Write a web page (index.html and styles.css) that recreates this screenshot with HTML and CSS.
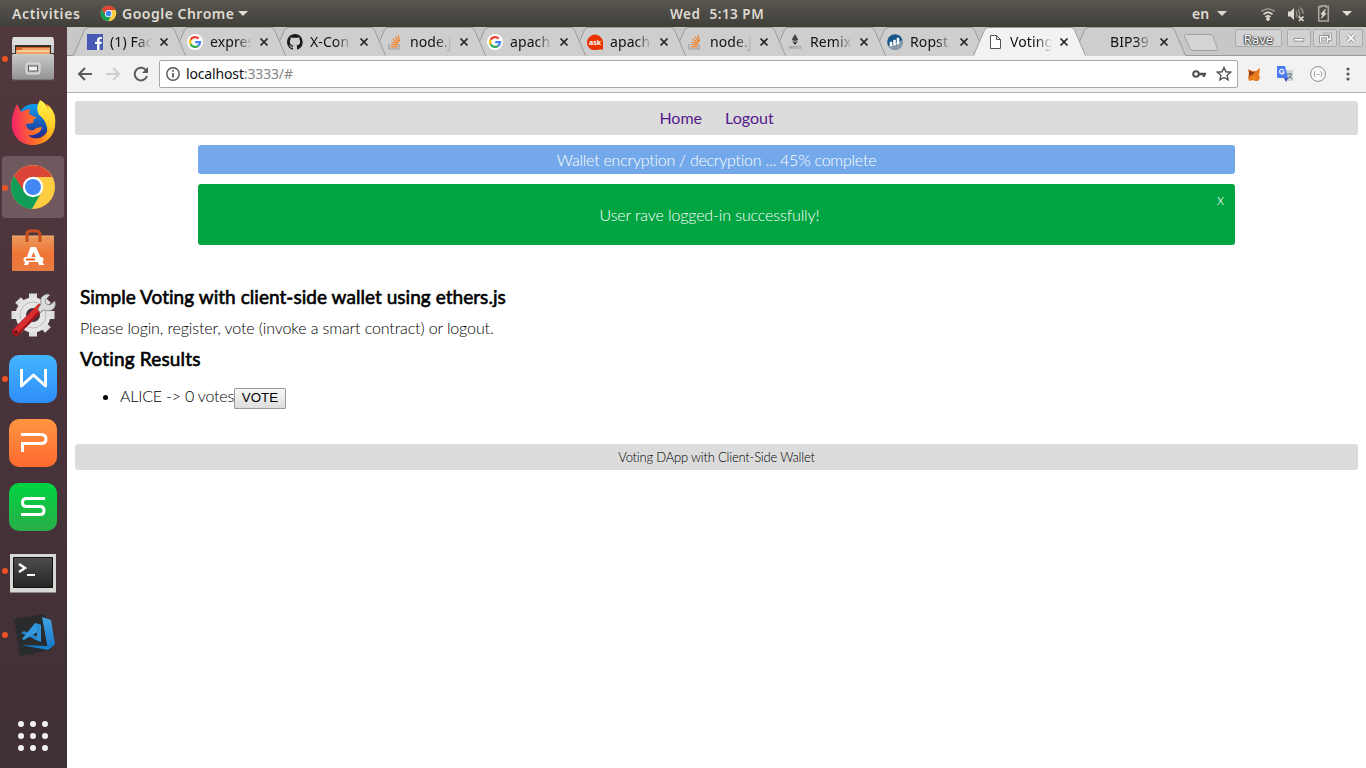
FILE: index.html
```html
<!DOCTYPE html>
<html lang="en">
<head>
<meta charset="utf-8">
<title>Voting DApp</title>
<link rel="stylesheet" href="styles.css">
</head>
<body>
<svg class="defs" aria-hidden="true">
  <defs>
    <symbol id="shape" viewBox="0 0 113 29">
      <path class="shape-fill" d="M0 29 L11 3 Q12 .5 15 .5 H98 Q101 .5 102 3 L113 29Z"/>
      <path class="shape-line" d="M.5 28.5 L11.5 3 Q12.500 .5 15 .5 H98 Q100.500 .5 101.500 3 L112.500 28.500"/>
    </symbol>
    <symbol id="close" viewBox="0 0 10 10"><path d="M1.500 1.500L8.500 8.500M8.500 1.500L1.500 8.500" stroke="currentColor" stroke-width="1.700"/></symbol>
    <symbol id="google" viewBox="0 0 16 16">
      <circle cx="8" cy="8" r="8" fill="#fff"/>
      <g fill="none" stroke-width="2.300"><path d="M11.600 4.600A5 5 0 0 0 3.600 5.700" stroke="#ea4335"/><path d="M3.600 5.700a5 5 0 0 0 0 4.600" stroke="#fbbc05"/><path d="M3.600 10.300a5 5 0 0 0 7.600 1.500" stroke="#34a853"/><path d="M11.200 11.800A5 5 0 0 0 13 8.200H8.200" stroke="#4285f4"/></g>
    </symbol>
    <symbol id="stack" viewBox="0 0 16 16">
      <path d="M2 10v5h10v-5" fill="none" stroke="#9b9da0" stroke-width="1.200"/>
      <path d="M4 12.800h6.500M4 10.500l6.500.7M4.500 8l6.200 1.800M5.700 5.300l5.600 3.400M8 2.800l4 5M11 1.200l1.500 6" stroke="#f48024" stroke-width="1.200"/>
    </symbol>
    <symbol id="chrome" viewBox="0 0 48 48">
      <circle cx="24" cy="24" r="22" fill="#ffcd42"/>
      <path d="M5 13A22 22 0 0 1 43.300 14H24L14.500 29Z" fill="#dc4437"/>
      <path d="M5 13A22 22 0 0 0 23 46L32.500 29H15.500Z" fill="#109d58"/>
      <circle cx="24" cy="24" r="10.200" fill="#fff"/><circle cx="24" cy="24" r="8" fill="#4387f5"/>
    </symbol>
    <linearGradient id="gray" x2="0" y2="1"><stop stop-color="#c9c9c9"/><stop offset="1" stop-color="#929292"/></linearGradient>
    <linearGradient id="blue" x2="0" y2="1"><stop stop-color="#44b5ff"/><stop offset="1" stop-color="#2f8df9"/></linearGradient>
    <linearGradient id="orange" x2="0" y2="1"><stop stop-color="#ff9440"/><stop offset="1" stop-color="#ff6a30"/></linearGradient>
    <linearGradient id="green" x2="0" y2="1"><stop stop-color="#00d441"/><stop offset="1" stop-color="#2aae48"/></linearGradient>
    <linearGradient id="bag" x2="0" y2="1"><stop stop-color="#e99a5c"/><stop offset=".5" stop-color="#ef7535"/><stop offset="1" stop-color="#e97b42"/></linearGradient>
    <linearGradient id="fox" x1="0" y1=".4" x2="1" y2=".3"><stop stop-color="#f52568"/><stop offset=".45" stop-color="#ff6a2b"/><stop offset=".8" stop-color="#ff9a1c"/><stop offset="1" stop-color="#ffbd25"/></linearGradient>
    <linearGradient id="flame" x2="0" y2="1"><stop stop-color="#fff44a"/><stop offset=".6" stop-color="#ffcb25"/><stop offset="1" stop-color="#ff8b1b"/></linearGradient>
    <linearGradient id="globe" x2="0" y2="1"><stop stop-color="#0aa0f0"/><stop offset="1" stop-color="#25288d"/></linearGradient>
    <linearGradient id="screen" x2="0" y2="1"><stop stop-color="#4d4d4d"/><stop offset="1" stop-color="#242424"/></linearGradient>
    <linearGradient id="code" x2="0" y2="1"><stop stop-color="#42a3e5"/><stop offset="1" stop-color="#1677c7"/></linearGradient>
  </defs>
</svg>

<header class="panel">
  <span class="panel-activities">Activities</span>
  <svg class="panel-chrome" viewBox="0 0 48 48"><use href="#chrome"/></svg>
  <span class="panel-app">Google Chrome</span>
  <i class="caret"></i>
  <span class="panel-clock"><span>Wed</span><span>5:13 PM</span></span>
  <span class="panel-lang">en</span>
  <i class="caret caret-lang"></i>
  <svg class="panel-wifi" viewBox="0 0 16 16"><g fill="none" stroke-width="1.600"><path d="M1.500 5.500Q8 .5 14.500 5.500" stroke="#99978f"/><path d="M3.500 8.300Q8 4.600 12.500 8.300M5.500 11Q8 8.800 10.500 11" stroke="#dfdbd2"/></g><circle cx="8" cy="13" r="1.900" fill="#dfdbd2"/></svg>
  <svg class="panel-sound" viewBox="0 0 18 16"><path d="M1 5.500h2.500L7 2v12L3.500 10.500H1z" fill="#dfdbd2"/><path d="M9 5q2 3 0 6M11 3q3.500 5 0 9M13.500 1.500Q16.500 5 16 8" fill="none" stroke="#918f87" stroke-width="1.300"/><path d="M12 10.500l4.500 4.500m0-4.500L12 15" stroke="#dfdbd2" stroke-width="1.700"/></svg>
  <svg class="panel-battery" viewBox="0 0 12 16"><path d="M4 1.500V.7h4v.8h2.500V15h-9V1.500z" fill="none" stroke="#aaa69e" stroke-width="1.500"/><path d="M7.800 4L3.500 8.500h2L4 12.500 8.500 8H6.400z" fill="#dfdbd2" stroke="#dfdbd2" stroke-width=".7"/></svg>
  <i class="caret caret-end"></i>
</header>

<div class="desktop">
  <nav class="dock">
    <div class="dock-item running"><svg viewBox="0 0 48 48"><path d="M3 6Q3 2 6 2H42q3 0 3 4V18H3z" fill="#c8c8c8"/><path d="M4 2h40l1 8H3z" fill="#dedede"/><path d="M6 10h36v12H6z" fill="#343030"/><path d="M7 12h34v10H7z" fill="#ce6027"/><path d="M7 15h5l2-2h27v9H7z" fill="#f0a160"/><path d="M8 16h32" stroke="#fff4d8"/><path d="M4 19h40q1 0 1 2v22q0 2-2 2H5q-2 0-2-2V21q0-2 1-2z" fill="url(#gray)"/><path d="M3 45h42" stroke="#62565a"/><rect x="17" y="28" width="14" height="11" rx="2" fill="#c5c5c5" stroke="#e0e0e0"/><rect x="19.500" y="31" width="9" height="5" fill="#f1f1f1" stroke="#5c5c5c"/></svg></div>
    <div class="dock-item"><svg viewBox="0 0 48 48"><circle cx="25" cy="22" r="17" fill="url(#globe)"/><path d="M5 12L8 5l4 8q5-3 9-3l-1 5 8 4-3 1-1 4-7 1q0 4 4 6 4 1 6-2l6-1q-1 5-6 7-3 2-8 1 6 6 14 2 9-6 7-16Q36 10 30 9q-1-4 2-7 4 3 5 7l1-4q9 7 8 19c0 14-11 22-23 22C8 46-2 31 5 12z" fill="url(#fox)"/><path d="M31 1q6 3 8 9l1-3q8 8 6 20-2 14-16 18 10-7 8-17-2-8-8-12-4-7 1-15z" fill="url(#flame)"/></svg></div>
    <div class="dock-item running active"><svg viewBox="0 0 48 48"><use href="#chrome"/></svg></div>
    <div class="dock-item"><svg viewBox="0 0 48 48"><path d="M3 9h42v35H3z" fill="url(#bag)"/><path d="M3 9h42" stroke="#f9b17d"/><path d="M18 15V8q0-4 3-4h6q4 0 4 4v7" fill="none" stroke="#c84c1e" stroke-width="3"/><path d="M21.500 20h5.500l8 18h-5l-5.500-13L19 38h-4z" fill="#fff"/><path d="M17 32.500h15" stroke="#fff" stroke-width="5" stroke-linecap="round"/><path d="M17 32.500h9" stroke="#ef6426" stroke-width="2"/></svg></div>
    <div class="dock-item"><svg viewBox="0 0 48 48"><g transform="translate(24 24)"><g stroke="#dedede" stroke-width="8"><path d="M0-21.500V21.500M-21.500 0H21.500"/><path d="M-15-15L15 15M15-15L-15 15"/></g><circle r="17.500" fill="#e5e5e5"/><circle r="13" fill="none" stroke="#bdbdbd"/><circle r="7" fill="#493037"/></g><path d="M7 41L31 17" stroke="#9e151a" stroke-width="8" stroke-linecap="round"/><path d="M7 40L30 16" stroke="#d92d30" stroke-width="5" stroke-linecap="round"/><path d="M29 18l3-5q-2-8 6-10l3 1-5 5 1 4 4 1 5-4q2 9-7 10l-5-1-3 3z" fill="#d8dcda" stroke="#888" stroke-width=".8"/><circle cx="7" cy="41" r="1.700" fill="#5d1017"/></svg></div>
    <div class="dock-item running"><svg viewBox="0 0 48 48"><rect width="48" height="48" rx="10" fill="url(#blue)"/><path d="M12.500 14V31L24.500 20 36.500 31V14" fill="none" stroke="#fff" stroke-width="3" stroke-linejoin="round"/></svg></div>
    <div class="dock-item"><svg viewBox="0 0 48 48"><rect width="48" height="48" rx="10" fill="url(#orange)"/><path d="M12 15.500h20q5 0 5 4.500t-5 4.500H13.500v8.500" fill="none" stroke="#fff" stroke-width="3"/></svg></div>
    <div class="dock-item"><svg viewBox="0 0 48 48"><rect width="48" height="48" rx="10" fill="url(#green)"/><path d="M36 15.500H17.500q-4 0-4 4t4 4H31q4 0 4 4t-4 4H12" fill="none" stroke="#fff" stroke-width="3"/></svg></div>
    <div class="dock-item running"><svg viewBox="0 0 48 48"><path d="M1 7h46v38H1z" fill="#d7d7d3"/><path d="M1 45.500h46" stroke="#898986"/><path d="M4.500 10.500h39v30h-39z" fill="url(#screen)" stroke="#111"/><path d="M10 17l6 4-6 4" fill="none" stroke="#fff" stroke-width="2.500"/><path d="M18 28h8" stroke="#fff" stroke-width="2"/></svg></div>
    <div class="dock-item running"><svg viewBox="0 0 48 48"><path d="M5 8l31-5 6 36-31 6z" fill="#292b2c"/><path d="M33 6l9 3 4 24-7 6z" fill="url(#code)"/><path d="M12 34l27 1 7-2-7 6z" fill="#167fcc"/><path d="M12 22l3-2 17 7V31z" fill="#2484cb"/><path d="M13 28l13-16 6 2v5L15 29z" fill="#3398de"/><path d="M26 12l6 2v17l-7-3 3-2V18z" fill="#2d91da"/></svg></div>
    <svg class="dock-apps" viewBox="0 0 32 32" fill="#f2f1ef"><circle cx="4" cy="4" r="3"/><circle cx="16" cy="4" r="3"/><circle cx="28" cy="4" r="3"/><circle cx="4" cy="16" r="3"/><circle cx="16" cy="16" r="3"/><circle cx="28" cy="16" r="3"/><circle cx="4" cy="28" r="3"/><circle cx="16" cy="28" r="3"/><circle cx="28" cy="28" r="3"/></svg>
  </nav>

  <main class="browser">
    <div class="tabs">
      <div class="tab t1"><svg class="tab-shape"><use href="#shape"/></svg><svg class="favicon" viewBox="0 0 16 16"><path d="M0 0h16v16H0z" fill="#4559b5"/><path d="M12.500 16V10h2l.3-2.300h-2.300V6.300c0-.8.400-1.200 1.300-1.200h1V3c-3-.4-4.700.7-4.700 3v1.700H8V10h2.100v6z" fill="#fff"/></svg><span class="tab-title">(1) Fac</span><svg class="tab-close"><use href="#close"/></svg></div>
      <div class="tab t2"><svg class="tab-shape"><use href="#shape"/></svg><svg class="favicon"><use href="#google"/></svg><span class="tab-title">expres</span><svg class="tab-close"><use href="#close"/></svg></div>
      <div class="tab t3"><svg class="tab-shape"><use href="#shape"/></svg><svg class="favicon" viewBox="0 0 16 16"><path d="M8 0C3.600 0 0 3.600 0 8c0 3.500 2.300 6.500 5.500 7.600.4.100.5-.2.500-.4v-1.500c-2.200.5-2.700-1-2.700-1-.4-.9-.9-1.200-.9-1.200-.7-.5.100-.5.100-.5.800.1 1.200.8 1.200.8.700 1.300 1.900.9 2.300.7.100-.5.300-.9.500-1.100-1.800-.2-3.600-.9-3.600-4 0-.9.300-1.600.8-2.100-.1-.2-.4-1 .1-2.100 0 0 .7-.2 2.200.8.600-.2 1.300-.3 2-.3s1.400.1 2 .3c1.500-1 2.200-.8 2.200-.8.400 1.100.2 1.900.1 2.100.5.600.8 1.300.8 2.100 0 3.100-1.900 3.700-3.700 3.900.3.300.6.800.6 1.500v2.200c0 .2.100.5.600.4A8 8 0 0 0 8 0z" fill="#1b1b1c"/></svg><span class="tab-title">X-Con</span><svg class="tab-close"><use href="#close"/></svg></div>
      <div class="tab t4"><svg class="tab-shape"><use href="#shape"/></svg><svg class="favicon"><use href="#stack"/></svg><span class="tab-title">node.j</span><svg class="tab-close"><use href="#close"/></svg></div>
      <div class="tab t5"><svg class="tab-shape"><use href="#shape"/></svg><svg class="favicon"><use href="#google"/></svg><span class="tab-title">apach</span><svg class="tab-close"><use href="#close"/></svg></div>
      <div class="tab t6"><svg class="tab-shape"><use href="#shape"/></svg><svg class="favicon" viewBox="0 0 16 16"><path d="M16 15.500h-4A8 8 0 1 1 16 8v3.500z" fill="#eb3300"/><text x="8" y="10.700" class="ask">ask</text></svg><span class="tab-title">apach</span><svg class="tab-close"><use href="#close"/></svg></div>
      <div class="tab t7"><svg class="tab-shape"><use href="#shape"/></svg><svg class="favicon"><use href="#stack"/></svg><span class="tab-title">node.j</span><svg class="tab-close"><use href="#close"/></svg></div>
      <div class="tab t8"><svg class="tab-shape"><use href="#shape"/></svg><svg class="favicon" viewBox="0 0 16 16"><path d="M8 0l3.200 5.500L8 7.500l-3.200-2z" fill="#444"/><path d="M4.800 6.400L8 8.500l3.200-2.100L8 11z" fill="#292929"/><text x="8" y="15" class="remix">remix</text></svg><span class="tab-title">Remix</span><svg class="tab-close"><use href="#close"/></svg></div>
      <div class="tab t9"><svg class="tab-shape"><use href="#shape"/></svg><svg class="favicon" viewBox="0 0 16 16"><circle cx="8" cy="8" r="7.800" fill="#17548a"/><path d="M1 12L15.800 6Q17 12 10 15.500 4 16.500 1 12z" fill="#8b9aa7"/><path d="M3 12V8h2v4zm3.500-1V6h2v5zM10 10V4h2v6z" fill="#fff" stroke="#fff" stroke-width=".5"/></svg><span class="tab-title">Ropst</span><svg class="tab-close"><use href="#close"/></svg></div>
      <div class="tab current"><svg class="tab-shape"><use href="#shape"/></svg><svg class="favicon" viewBox="0 0 16 16"><path d="M3.500 1.500h6l4 4v9h-10zM9.500 1.500v4h4" fill="#fff" stroke="#555"/></svg><span class="tab-title">Voting</span><svg class="tab-close"><use href="#close"/></svg></div>
      <div class="tab t11"><svg class="tab-shape"><use href="#shape"/></svg><i class="favicon"></i><span class="tab-title">BIP39</span><svg class="tab-close"><use href="#close"/></svg></div>
      <svg class="new-tab" viewBox="0 0 36 18"><path d="M3.500.5H27q2 0 3 2l4.500 12q1 2-1.500 2H10q-2 0-3-2L1.500 2.500q-.8-2 2-2z" fill="#d4d4d4" stroke="#a2a2a2"/></svg>
      <div class="window-buttons">
        <span class="profile">Rave</span>
        <svg viewBox="0 0 24 18"><path d="M6.500 9.500h11v3h-11z" fill="#fff" stroke="#8b8b8b"/></svg>
        <svg viewBox="0 0 24 18"><path d="M10 4.500h8v6h-3M7 7.500h8v6H7z" fill="none" stroke="#888" stroke-width="3"/><path d="M10 4.500h8v6h-3M7 7.500h8v6H7z" fill="none" stroke="#fff" stroke-width="1.300"/></svg>
        <svg viewBox="0 0 24 18"><path d="M8 5l8 8m0-8l-8 8" stroke="#888" stroke-width="3.500"/><path d="M8 5l8 8m0-8l-8 8" stroke="#fff" stroke-width="2"/></svg>
      </div>
    </div>

    <div class="toolbar">
      <svg class="nav-icon" viewBox="0 0 16 16"><path d="M15 8H2M8 2L2 8l6 6" fill="none" stroke="#5a5a5a" stroke-width="2"/></svg>
      <svg class="nav-icon" viewBox="0 0 16 16"><path d="M1 8h13M8 2l6 6-6 6" fill="none" stroke="#cecece" stroke-width="2"/></svg>
      <svg class="nav-icon" viewBox="0 0 16 16"><path d="M13.500 5A6.300 6.300 0 1 0 14 10" fill="none" stroke="#5a5a5a" stroke-width="2"/><path d="M15 1v6H9z" fill="#5a5a5a"/></svg>
      <div class="address">
        <svg class="info" viewBox="0 0 14 14"><circle cx="7" cy="7" r="6.200" fill="none" stroke="#555" stroke-width="1.400"/><path d="M7 6v4.500M7 3v1.700" stroke="#555" stroke-width="1.700"/></svg>
        <span class="url">localhost<span>:3333/#</span></span>
        <svg class="key" viewBox="0 0 14 10"><circle cx="4" cy="5" r="2.800" fill="none" stroke="#505050" stroke-width="2"/><path d="M6.500 5H14M11.800 5v3" stroke="#505050" stroke-width="2.300"/></svg>
        <svg class="star" viewBox="0 0 16 16"><path d="M8 1.500l1.900 4.300 4.700.4-3.600 3.100 1.100 4.600L8 11.500l-4.100 2.400L5 9.300 1.400 6.200l4.700-.4z" fill="none" stroke="#505050" stroke-width="1.400"/></svg>
      </div>
      <svg class="metamask" viewBox="0 0 12 13"><path d="M0 1l4 2h4l4-3-1 7 1 3-2 3H7l-2-1-4 1-1-4 1-3z" fill="#e8791d"/><path d="M1 2l3 2h3l-3 3-3 1z" fill="#933d15"/><path d="M5 9l3-1-2 4z" fill="#ef9834"/></svg>
      <svg class="translate" viewBox="0 0 16 16"><path d="M6 4h10v11H9z" fill="#d2d5d6"/><path d="M0 0h8l3 12H1q-1 0-1-1z" fill="#4b7df0"/><path d="M7 12h4l-2 4z" fill="#3c47bb"/><path d="M7 4.500A2.300 2.300 0 1 0 7.200 6H5" fill="none" stroke="#fff" stroke-width="1.200"/><path d="M10 8h5m-2.500-1v1m2 0q-1 4-4 5m1-3l4 3" stroke="#607d8b" fill="none"/></svg>
      <svg class="braces" viewBox="0 0 16 16"><circle cx="8" cy="8" r="7.400" fill="#fafafa" stroke="#8a8a8a"/><path d="M5.500 5q-1 0-1 2L4 8l.5 1q0 2 1 2M10.500 5q1 0 1 2l.5 1-.5 1q0 2-1 2" fill="none" stroke="#8a8a8a" stroke-width=".8"/><path d="M6.500 8.500h3" stroke="#8a8a8a" stroke-dasharray=".8 .3"/></svg>
      <svg class="menu" viewBox="0 0 4 14" fill="#5a5a5a"><circle cx="2" cy="2" r="1.600"/><circle cx="2" cy="7" r="1.600"/><circle cx="2" cy="12" r="1.600"/></svg>
    </div>

    <div class="page">
      <div class="site-nav"><a href="#">Home</a><a href="#">Logout</a></div>
      <div class="notice progress"><span>Wallet encryption / decryption ... 45% complete</span></div>
      <div class="notice success"><span class="success-text">User rave logged-in successfully!</span><span class="dismiss">x</span></div>
      <section class="content">
        <h3 class="h-main">Simple Voting with client-side wallet using ethers.js</h3>
        <p>Please login, register, vote (invoke a smart contract) or logout.</p>
        <h3 class="h-results">Voting Results</h3>
        <ul><li><span>ALICE -&gt; 0 votes</span><button>VOTE</button></li></ul>
      </section>
      <footer>Voting DApp with Client-Side Wallet</footer>
    </div>
  </main>
</div>
</body>
</html>
```
FILE: styles.css
```css
* { box-sizing: border-box; }
body { margin: 0; width: 1366px; height: 768px; overflow: hidden; font-family: "Noto Sans", sans-serif; background: #fff; }
svg { display: block; flex: none; }
.defs { position: absolute; width: 0; height: 0; }

.panel { height: 27px; display: flex; align-items: center; padding-left: 12px; background: linear-gradient(#595650, #403f3a); color: #dfdbd2; font: 600 14px/26px "Noto Sans", sans-serif; white-space: nowrap; }
.panel-activities { width: 88px; letter-spacing: .6px; }
.panel-chrome { width: 17px; height: 17px; margin-right: 5px; }
.panel-app { width: 112px; letter-spacing: .5px; }
.caret { flex: none; width: 0; height: 0; margin-left: 4px; border: 5px solid transparent; border-top: 5px solid #dfdbd2; border-bottom: 0; }
.panel-clock { width: 95px; margin-left: 422px; display: flex; gap: 9px; font-size: 13.500px; letter-spacing: .5px; }
.panel-lang { margin-left: 427px; width: 17px; }
.caret-lang { margin-left: 8px; }
.panel-wifi { width: 16px; height: 16px; margin-left: 33px; }
.panel-sound { width: 18px; height: 16px; margin-left: 11px; }
.panel-battery { width: 13px; height: 17px; margin: 0 12px; }
.caret-end { margin-left: 0; }

.desktop { display: flex; height: 741px; }
.dock { flex: none; width: 67px; display: flex; flex-direction: column; background: linear-gradient(#51383d, #48333a 55%, #3f3034); }
.dock-item { position: relative; height: 64px; flex: none; margin: 0 3px 0 2px; display: flex; align-items: center; justify-content: center; border-radius: 4px; }
.dock-item svg { width: 48px; height: 48px; }
.dock-item.active { height: 62px; margin-top: 1px; margin-bottom: 1px; background: #6f585e; }
.running::before { content: ""; position: absolute; left: 0; top: 29px; width: 6px; height: 6px; border-radius: 50%; background: #f05323; }
.dock-apps { width: 32px; height: 32px; margin: 53px 0 0 17px; }

.browser { flex: 1; min-width: 0; background: #fff; }
.tabs { height: 29px; display: flex; padding-left: 6px; background: linear-gradient(transparent 28px, #999 28px), #c7c7c7; }
.tab { position: relative; flex: none; width: 113px; height: 29px; margin-right: -13px; padding: 0 17px 0 14px; display: flex; align-items: center; }
.tab-shape { position: absolute; z-index: -1; left: 0; top: 0; width: 113px; height: 29px; fill: #cecece; }
.shape-line { fill: none; stroke: #999; }
.t1 { z-index: 20; } .t2 { z-index: 19; } .t3 { z-index: 18; } .t4 { z-index: 17; } .t5 { z-index: 16; } .t6 { z-index: 15; } .t7 { z-index: 14; } .t8 { z-index: 13; } .t9 { z-index: 12; } .t11 { z-index: 10; }
.current { z-index: 30; }
.current .tab-shape { fill: #f2f2f2; }
.favicon { width: 16px; height: 16px; flex: none; margin-right: 7px; }
.tab-title { width: 42px; height: 24px; overflow: hidden; font-size: 14px; line-height: 24px; letter-spacing: .1px; color: #111; white-space: nowrap; -webkit-mask-image: linear-gradient(90deg, #000 62%, transparent); mask-image: linear-gradient(90deg, #000 62%, transparent); }
.tab-close { width: 10px; height: 10px; margin-left: 7px; color: #222; }
.ask { font: bold 7px "Noto Sans", sans-serif; fill: #fff; text-anchor: middle; }
.remix { font: 5px "Noto Sans", sans-serif; fill: #888; text-anchor: middle; }
.new-tab { width: 36px; height: 18px; margin: 7px 0 0 10px; }
.window-buttons { display: flex; gap: 2px; margin: 2px 0 0 16px; }
.window-buttons > * { width: 24px; height: 18px; border: 1px solid #aaa; border-radius: 2px; background: #d2d2d2; }
.window-buttons .profile { width: 47px; margin-right: 3px; color: #fff; font: 13px/18px "Noto Sans", sans-serif; text-align: center; text-shadow: 0 0 1px #333, 1px 0 1px #444, -1px 0 1px #444, 0 1px 1px #444; }

.toolbar { height: 37px; display: flex; align-items: center; padding: 0 16px 0 10px; background: #f2f2f2; border-bottom: 1px solid #aeaeae; }
.nav-icon { width: 16px; height: 16px; margin-right: 12px; }
.nav-icon + .nav-icon + .nav-icon { margin-right: 10px; }
.address { width: 1079px; height: 28px; margin-right: 10px; padding: 0 5px 0 6px; display: flex; align-items: center; background: #fff; border: 1px solid #a8a8a8; border-radius: 2px; }
.info { width: 14px; height: 14px; margin-right: 6px; }
.url { flex: 1; font-size: 14px; line-height: 24px; letter-spacing: -.15px; color: #111; }
.url span { color: #858585; }
.key { width: 14px; height: 10px; margin-right: 10px; }
.star { width: 16px; height: 16px; }
.metamask { width: 12px; height: 13px; }
.translate { width: 16px; height: 16px; margin-left: 17px; }
.braces { width: 16px; height: 16px; margin-left: 17px; }
.menu { width: 4px; height: 14px; margin-left: 20px; }

.page { padding: 8px 8px 0; font: 300 16px/19px Lato, sans-serif; color: #000; }
.site-nav { height: 34px; padding-top: 7px; display: flex; justify-content: center; gap: 23px; background: #dcdcdc; border-radius: 3px; font-weight: 400; }
.site-nav a { color: #551a8b; text-decoration: none; }
.notice { width: 1037px; margin: 10px auto 0; border-radius: 3px; color: #fff; text-align: center; }
.progress { height: 29px; padding-top: 5px; background: #73a9ea; letter-spacing: -.24px; }
.success { height: 61px; padding: 21px 11px 0 10px; display: flex; background: #00a541; }
.success-text { flex: 1; padding-right: 6px; letter-spacing: -.12px; }
.dismiss { margin-top: -14px; font-size: 15px; line-height: 17px; }
.content { height: 199px; padding: 41px 5px 0; }
h3 { margin: 0; font: 400 19px/22px Lato, sans-serif; letter-spacing: .04px; -webkit-text-stroke: .6px #000; }
p { margin: 10px 0 0; letter-spacing: -.12px; }
.h-results { margin-top: 11px; letter-spacing: .15px; }
ul { margin: 15px 0 0; padding-left: 40px; }
li { line-height: 21px; }
li span { letter-spacing: -.2px; }
button { height: 21px; width: 52px; padding: 0; border: 1px solid #999; border-radius: 1px; background: linear-gradient(#f8f8f8, #ddd); color: #000; font: 13.333px/18px "Liberation Sans", sans-serif; }
footer { height: 26px; padding-top: 5px; background: #dcdcdc; border-radius: 3px; text-align: center; font-size: 13px; line-height: 17px; letter-spacing: -.2px; }
```
